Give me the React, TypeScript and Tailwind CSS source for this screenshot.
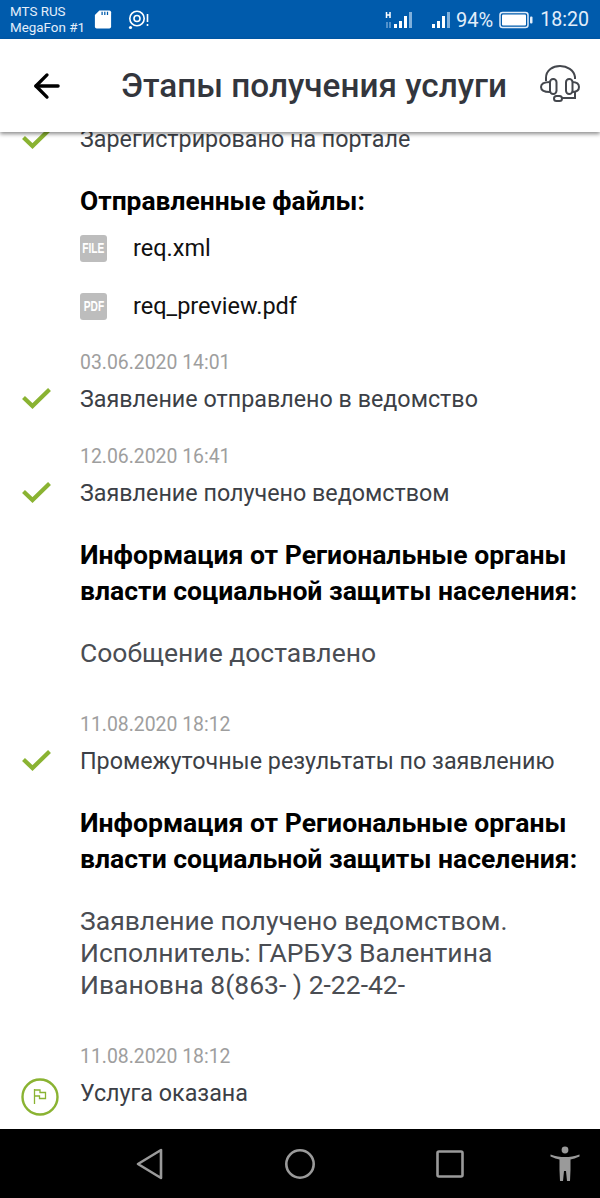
import { ArrowLeft } from 'lucide-react';

const labelFont = "font-['Roboto',sans-serif]";

function Check() {
  return (
    <svg width="32" height="24" viewBox="0 0 32 24" className="absolute left-[21px] top-0">
      <path d="M2.5 11.5 L11.5 20 L28.5 3.5" fill="none" stroke="#8ab332" strokeWidth="4.2" />
    </svg>
  );
}

function Flag() {
  return (
    <svg width="40" height="40" viewBox="0 0 40 40" className="absolute left-[20px] top-[-3px]">
      <circle cx="20" cy="20" r="17.5" fill="none" stroke="#8ab332" strokeWidth="2.4" />
      <path d="M14.5 12 V27 M14.5 13 H20 V15.5 H25.5 V21.5 H19.5 V19 H14.5" fill="none" stroke="#8ab332" strokeWidth="1.3" />
    </svg>
  );
}

function FileBadge({ label }: { label: string }) {
  return (
    <div className="flex h-[27px] w-[27px] items-center justify-center rounded-[3px] bg-[#bdbdbd]">
      <span className="font-['Liberation_Sans',sans-serif] text-[15px] font-bold text-white scale-x-[0.68]">{label}</span>
    </div>
  );
}

function Stage({ date, text, icon, className }: { date: string; text: string; icon: React.ReactNode; className?: string }) {
  return (
    <div className={className}>
      <div className="pl-20 text-[19.4px] leading-[24px] text-[#9e9e9e]">{date}</div>
      <div className="relative mt-[11px] pl-20 text-[23.3px] leading-[26px] text-[#3c3f46]">
        {icon}
        {text}
      </div>
    </div>
  );
}

function InfoBlock({ body, className }: { body: React.ReactNode; className?: string }) {
  return (
    <div className={`pl-20 ${className ?? ''}`}>
      <div className="text-[26.55px] font-bold leading-[36px] text-black">
        Информация от Региональные органы
        <br />
        власти социальной защиты населения:
      </div>
      <div className="mt-[28px] text-[26.5px] leading-[32px] text-[#4a4d53]">{body}</div>
    </div>
  );
}

export default function App() {
  return (
    <div className={`flex h-[1198px] w-[600px] flex-col overflow-hidden bg-white ${labelFont}`}>
      <div className="flex h-[39px] shrink-0 items-center bg-[#005bac] text-white">
        <div className="ml-[10px] w-[84px] shrink-0 text-[13.4px] leading-[16px] text-[#e3eefa]">
          <div>MTS RUS</div>
          <div>MegaFon #1</div>
        </div>
        <svg width="18" height="21" viewBox="0 0 20 22" className="shrink-0">
          <path d="M6 1 H17 Q19 1 19 3 V19 Q19 21 17 21 H3 Q1 21 1 19 V6 Z" fill="#fff" />
          <path d="M9 2.5 V6 M12 2.5 V6 M15 2.5 V6" stroke="#005bac" strokeWidth="1.4" />
        </svg>
        <svg width="22" height="22" viewBox="0 0 22 22" className="ml-[16px] shrink-0">
          <circle cx="9" cy="9.5" r="7.2" fill="none" stroke="#fff" strokeWidth="1.6" />
          <circle cx="9" cy="9.5" r="3" fill="none" stroke="#fff" strokeWidth="1.6" />
          <circle cx="2.5" cy="18.5" r="1.6" fill="#fff" />
          <path d="M19.5 5 V13 M19.5 15 V17" stroke="#fff" strokeWidth="1.6" />
        </svg>
        <svg width="30" height="20" viewBox="0 0 30 20" className="ml-[234px] shrink-0">
          <rect x="10" y="14" width="3" height="4" fill="#fff" />
          <rect x="15" y="11" width="3" height="7" fill="#fff" />
          <rect x="20" y="6" width="3" height="12" fill="#fff" />
          <rect x="25" y="2" width="3" height="16" fill="#7fb0dc" />
          <path d="M2.5 2 V8 M6 2 V8 M2.5 5 H6" stroke="#fff" strokeWidth="1.5" fill="none" />
          <path d="M3 12 V18 M6 12 V18" stroke="#7fb0dc" strokeWidth="1.3" />
        </svg>
        <svg width="22" height="20" viewBox="0 0 22 20" className="ml-[16px] shrink-0">
          <rect x="2" y="14" width="3" height="4" fill="#fff" />
          <rect x="7" y="11" width="3" height="7" fill="#fff" />
          <rect x="12" y="6" width="3" height="12" fill="#fff" />
          <rect x="17" y="2" width="3" height="16" fill="#7fb0dc" />
        </svg>
        <span className="ml-[4px] shrink-0 text-[20px] text-[#e3eefa]">94%</span>
        <svg width="34" height="18" viewBox="0 0 34 18" className="ml-[6px] shrink-0">
          <rect x="1" y="1.5" width="28" height="15" rx="2.5" fill="none" stroke="#e3eefa" strokeWidth="1.5" />
          <rect x="3" y="3.5" width="24" height="11" rx="1" fill="#fff" />
          <rect x="31" y="5.5" width="2.5" height="7" rx="1" fill="#e3eefa" />
        </svg>
        <span className="ml-[7px] shrink-0 text-[19.6px] text-[#e3eefa]">18:20</span>
      </div>

      <div className="relative z-10 flex h-[93px] shrink-0 items-center bg-white shadow-[0_2px_4px_rgba(0,0,0,0.45)]">
        <ArrowLeft size={38} strokeWidth={2.1} color="#000" className="ml-[28px] shrink-0" />
        <h1 className="ml-[55px] w-[386px] shrink-0 whitespace-nowrap text-[33.3px] font-medium leading-none text-[#33363d]">Этапы получения услуги</h1>
        <svg width="42" height="42" viewBox="0 0 42 42" className="ml-[33px] mt-[-2px] shrink-0" fill="none" stroke="#44474d" strokeWidth="2">
          <path d="M6 17 V14 C6 6 13 2 20 2 C27 2 34 6 35 13 V15" />
          <rect x="10" y="15" width="6.5" height="15" rx="3.2" />
          <rect x="26" y="15" width="6.5" height="15" rx="3.2" />
          <path d="M10 18 C4 18 1 20 1 23 C1 26 4 28 10 28 M32 18 C37 18 39 20 39 23 C39 26 37 28 32 28" />
          <path d="M35 28 V34 H22" />
          <rect x="14" y="32" width="8" height="5" rx="2.5" />
        </svg>
      </div>

      <div className="min-h-0 flex-1 overflow-hidden">
        {/* list is scrolled a little, first row tucks under the header */}
        <div className="relative mt-[-6px] pl-20 text-[23.3px] leading-[26px] text-[#3c3f46]">
          <Check />
          Зарегистрировано на портале
        </div>

        <div className="mt-[31px] pl-20 text-[26.4px] font-bold leading-[36px] text-black">Отправленные файлы:</div>
        <div className="mt-[13px] flex items-center pl-20 text-[23.5px] leading-[32px] text-[#111]">
          <FileBadge label="FILE" />
          <span className="ml-[26px]">req.xml</span>
        </div>
        <div className="mt-[26px] flex items-center pl-20 text-[23.5px] leading-[32px] text-[#111]">
          <FileBadge label="PDF" />
          <span className="ml-[26px]">req_preview.pdf</span>
        </div>

        <Stage className="mt-[29px]" date="03.06.2020 14:01" text="Заявление отправлено в ведомство" icon={<Check />} />
        <Stage className="mt-[33px]" date="12.06.2020 16:41" text="Заявление получено ведомством" icon={<Check />} />
        <InfoBlock className="mt-[31px]" body="Сообщение доставлено" />
        <Stage className="mt-[44px]" date="11.08.2020 18:12" text="Промежуточные результаты по заявлению" icon={<Check />} />
        <InfoBlock
          className="mt-[31px]"
          body={
            <>
              Заявление получено ведомством.
              <br />
              Исполнитель: ГАРБУЗ Валентина
              <br />
              Ивановна 8(863- ) 2-22-42-
            </>
          }
        />
        <Stage className="mt-[44px]" date="11.08.2020 18:12" text="Услуга оказана" icon={<Flag />} />
      </div>

      <div className="relative flex h-[69px] shrink-0 items-center bg-black">
        <svg width="30" height="34" viewBox="0 0 30 34" className="ml-[135px] shrink-0" fill="none" stroke="#9a9a9a" strokeWidth="2.6" strokeLinejoin="round">
          <path d="M26 3 V31 L3 17 Z" />
        </svg>
        <svg width="32" height="32" viewBox="0 0 32 32" className="ml-[119px] shrink-0" fill="none" stroke="#9a9a9a" strokeWidth="2.6">
          <circle cx="16" cy="16" r="13.7" />
        </svg>
        <svg width="28" height="28" viewBox="0 0 28 28" className="ml-[120px] shrink-0" fill="none" stroke="#9a9a9a" strokeWidth="2.6">
          <rect x="1.5" y="1.5" width="25" height="25" rx="1.5" />
        </svg>
        <svg width="30" height="36" viewBox="0 0 30 36" className="ml-[86px] shrink-0" fill="#9a9a9a">
          <circle cx="15" cy="4" r="3.4" />
          <path d="M0.5 8.5 C6 10.5 10 11 15 11 C20 11 24 10.5 29.5 8.5 L29.5 10.5 C26 12 23 13 20.5 13.5 V24 L20 35 H17 L16 25 H14 L13 35 H10 L9.5 24 V13.5 C7 13 4 12 0.5 10.5 Z" />
        </svg>
      </div>
    </div>
  );
}
